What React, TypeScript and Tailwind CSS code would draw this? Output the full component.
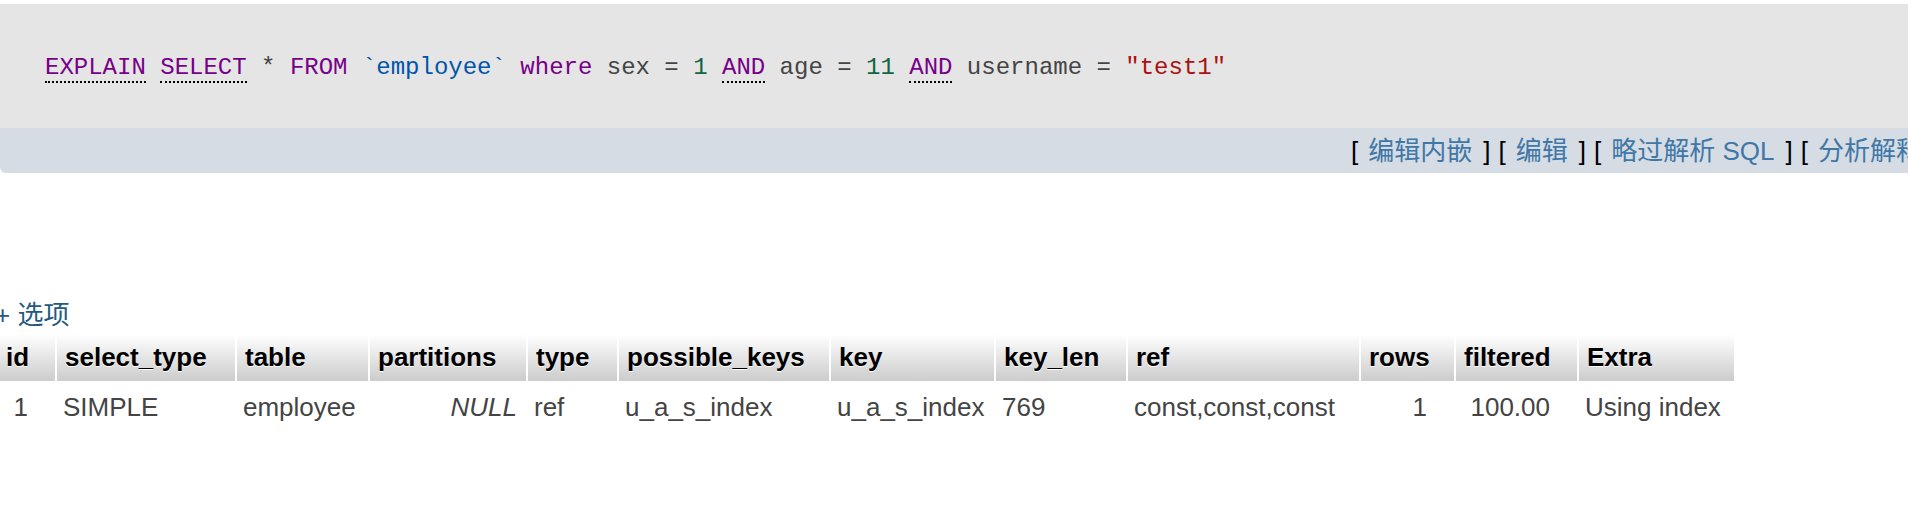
import React from "react";

const sans = '"Liberation Sans", "Noto Sans CJK SC", Arial, sans-serif';
const mono = '"Liberation Mono", "Courier New", monospace';

type Tok = { t: string; c: string; doc?: boolean };

const sql: Tok[] = [
  { t: "EXPLAIN", c: "text-[#770088]", doc: true },
  { t: " ", c: "" },
  { t: "SELECT", c: "text-[#770088]", doc: true },
  { t: " * ", c: "text-[#444]" },
  { t: "FROM", c: "text-[#770088]" },
  { t: " ", c: "" },
  { t: "`employee`", c: "text-[#0055aa]" },
  { t: " ", c: "" },
  { t: "where", c: "text-[#770088]" },
  { t: " sex = ", c: "text-[#444]" },
  { t: "1", c: "text-[#116644]" },
  { t: " ", c: "" },
  { t: "AND", c: "text-[#770088]", doc: true },
  { t: " age = ", c: "text-[#444]" },
  { t: "11", c: "text-[#116644]" },
  { t: " ", c: "" },
  { t: "AND", c: "text-[#770088]", doc: true },
  { t: " username = ", c: "text-[#444]" },
  { t: '"test1"', c: "text-[#aa1111]" },
];

const tools = ["编辑内嵌", "编辑", "略过解析 SQL", "分析解释 SQL", "创建 PHP 代码", "刷新"];

interface Col {
  name: string;
  width: string;
  value: string;
  align?: "num" | "null";
}

const cols: Col[] = [
  { name: "id", width: "w-[58px]", value: "1", align: "num" },
  { name: "select_type", width: "w-[180px]", value: "SIMPLE" },
  { name: "table", width: "w-[133px]", value: "employee" },
  { name: "partitions", width: "w-[158px]", value: "NULL", align: "null" },
  { name: "type", width: "w-[91px]", value: "ref" },
  { name: "possible_keys", width: "w-[212px]", value: "u_a_s_index" },
  { name: "key", width: "w-[165px]", value: "u_a_s_index" },
  { name: "key_len", width: "w-[132px]", value: "769" },
  { name: "ref", width: "w-[233px]", value: "const,const,const" },
  { name: "rows", width: "w-[95px]", value: "1", align: "num" },
  { name: "filtered", width: "w-[123px]", value: "100.00", align: "num" },
  { name: "Extra", width: "w-[157px]", value: "Using index" },
];

export default function App() {
  return (
    <div
      className="w-[1908px] h-[514px] overflow-hidden bg-white pt-[4px]"
      style={{ fontFamily: sans }}
    >
      <div className="rounded-bl-[6px] overflow-hidden">
        <div
          className="h-[124px] bg-[#e5e5e5] flex items-center pl-[45px] pt-[4px] text-[24px]"
          style={{ fontFamily: mono }}
        >
          <div className="leading-[32px] whitespace-pre">
            {sql.map((s, i) => (
              <span
                key={i}
                className={
                  s.doc
                    ? `${s.c} border-b-2 border-dotted border-black`
                    : s.c
                }
              >
                {s.t}
              </span>
            ))}
          </div>
        </div>
        <div className="h-[45px] bg-[#d5dce3] flex items-center pl-[1351px] text-[26px] leading-[30px] whitespace-nowrap text-black">
          {tools.map((t) => (
            <span key={t} className="mr-[8px]">
              [<a className="ml-[10px] mr-[11px] text-[#3f77a8]">{t}</a>]
            </span>
          ))}
        </div>
      </div>

      <div className="mt-[126px] ml-[-5px] text-[26px] leading-[32px] text-[#235a81] whitespace-pre">
        {"+ 选项"}
      </div>

      <table className="table-fixed border-collapse mt-[3px] ml-[-2px] w-[1737px] text-[26px]">
        <thead>
          <tr>
            {cols.map((c) => (
              <th
                key={c.name}
                className={`${c.width} h-[47px] p-0 pl-[8px] text-left font-bold text-black bg-linear-to-b from-white to-[#cccccc] border-r-2 border-white [text-shadow:0_1px_0_#fff] whitespace-nowrap`}
              >
                {c.name}
              </th>
            ))}
          </tr>
        </thead>
        <tbody>
          <tr>
            {cols.map((c) => (
              <td
                key={c.name}
                className={
                  c.align === "num"
                    ? "h-[52px] p-0 pr-[28px] text-right text-[#444] whitespace-nowrap"
                    : c.align === "null"
                    ? "h-[52px] p-0 pr-[10px] text-right italic text-[#444] whitespace-nowrap"
                    : "h-[52px] p-0 pl-[7px] text-left text-[#444] whitespace-nowrap"
                }
              >
                {c.value}
              </td>
            ))}
          </tr>
        </tbody>
      </table>
    </div>
  );
}
